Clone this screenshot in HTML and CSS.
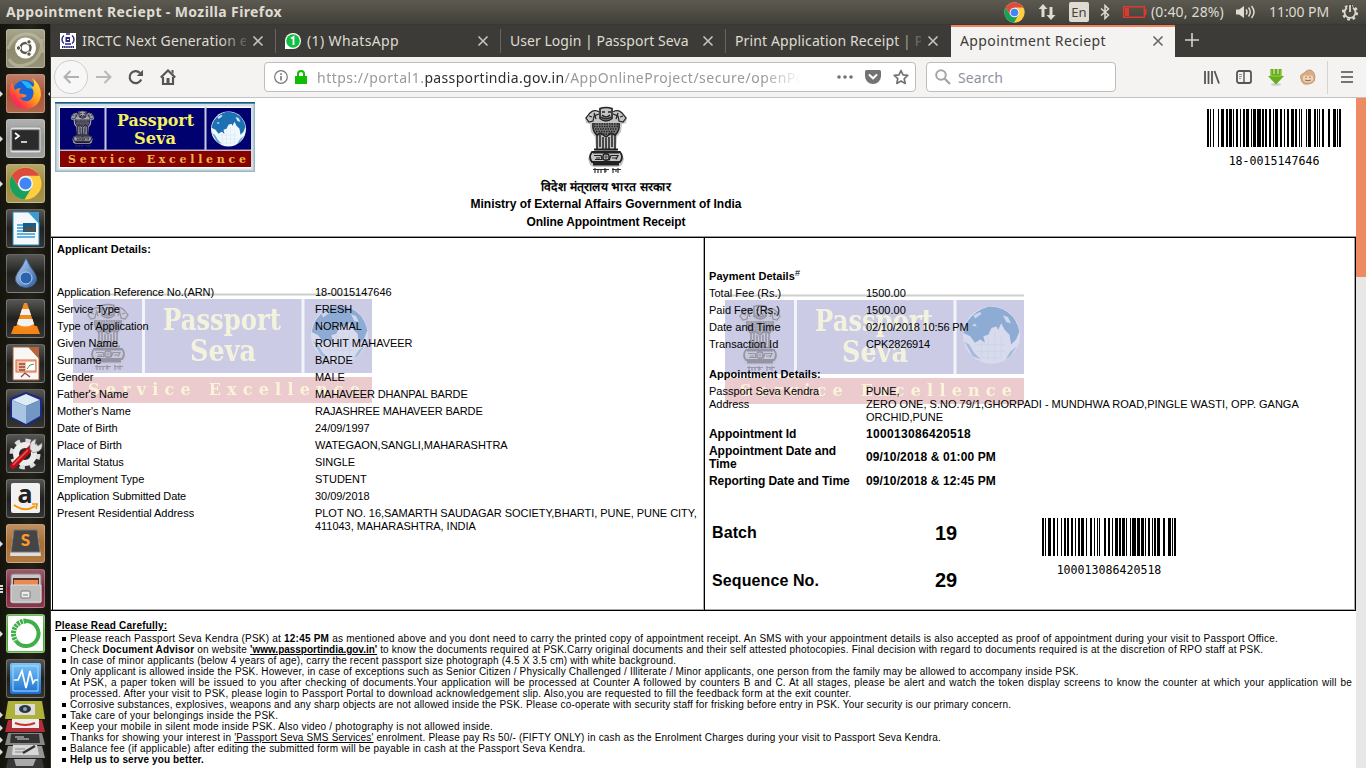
FILE: index.html
```html
<!DOCTYPE html>
<html lang="en">
<head>
<meta charset="utf-8">
<title>Appointment Reciept</title>
<link rel="stylesheet" href="styles.css">
</head>
<body>
<svg class="defs" width="0" height="0">
  <defs>
    <linearGradient id="fox" x1="1" y1="0" x2="0" y2="1"><stop offset="0" stop-color="#fff44f"/><stop offset=".45" stop-color="#ff9a1a"/><stop offset=".75" stop-color="#ff3647"/><stop offset="1" stop-color="#e31587"/></linearGradient>
    <linearGradient id="drop" x1="0" y1="0" x2="1" y2="1"><stop offset="0" stop-color="#c5daf2"/><stop offset="1" stop-color="#2a5ea8"/></linearGradient>
    <linearGradient id="blue" x1="0" y1="0" x2="0" y2="1"><stop offset="0" stop-color="#7cc4f8"/><stop offset="1" stop-color="#1a70cf"/></linearGradient>
    <symbol id="chrome" viewBox="0 0 32 32">
      <circle cx="16" cy="16" r="15.5" fill="#ffcd40"/>
      <path d="M2.6 8.2A15.5 15.5 0 0 0 15 31.5L22 20 16 16 9.5 19.8z" fill="#17a05e"/>
      <path d="M2.6 8.2 9.5 19.8 16 8.5H29.4A15.5 15.5 0 0 0 2.6 8.2z" fill="#dd4b3e"/>
      <circle cx="16" cy="16" r="7.4" fill="#f1f1f1"/><circle cx="16" cy="16" r="5.8" fill="#4286f5"/>
    </symbol>
    <symbol id="emblem" viewBox="0 0 44 68">
      <path d="M15 2h14v5l4-2 5 1 5 6-1 5-4 1-1 8-4 5-1 13 3 3h3l2 6-2 6-4 2H10l-4-2-2-6 2-6h3l3-3-1-13-4-5-1-8-4-1-1-5 5-6 5-1 3 2z" fill="#c4c4c4"/>
      <path d="M8 17h28l-1 8-3 5-5-1-5 2-5-2-5 1-3-5z" fill="#777"/>
      <g fill="none" stroke="#222">
        <path d="M16 2.500q6-2 12 0v10q-6 5-12 0zM18 6h3m3 0h3M18 9q4 4 8 0M17 11q5 4 10 0" stroke-width="1.600"/>
        <path d="M15 6q-5-3-9 1l-4 5 3 4 4-1 1-5 5-2M29 6q5-3 9 1l4 5-3 4-4-1-1-5-5-2M5 10l3 1M39 10l-3 1M10 7l2 6M34 7l-2 6" stroke-width="1.200"/>
        <path d="M9 17q-1 8 4 12l4-2 5 4 5-4 4 2q5-4 4-12" stroke-width="1.400"/>
        <path d="M10 18h24M10 20.500h24M11 23h22M12 25.500h20M14 28h16" stroke-width="1.300" stroke-dasharray="1.500 1"/>
        <path d="M13 29v14m3-14v12M19 31v12M22 32v11M25 31v12M28 29v12M31 29v14" stroke-width="1.500"/>
        <path d="M10 43.500h24M8 46q-4 5 0 10h28q4-5 0-10z" stroke-width="1.800"/>
        <path d="M9 47h26M10 49.500h7l1 4h-7m14 1 2-5h7l-2 4M12 52h4M28 52h5" stroke-width="1.200"/>
        <path d="M9 58h26" stroke-width="3"/>
        <circle cx="22" cy="51" r="3.200" stroke-width="1.400"/><path d="M22 48v6M19 51h6" stroke-width=".7"/>
      </g>
      <path d="M9 63.500h16m3 0h9M11 62v5m3-3v3m3-4v4m4-5v5m2-2h-3m9-3v5m3-4v3m2-4v5" fill="none" stroke="#333" stroke-width="1.200"/>
    </symbol>
    <symbol id="globe" viewBox="0 0 36 36">
      <circle cx="18" cy="18" r="17.500" fill="#f1f8fc"/>
      <path d="M3.500 9.500Q8 3 16 .8q9-.5 15 6 3 4 4 9l-2 5-3 3-1-6-3-3-2-4-2 4-1-2-3 1-2 4-3 1 1 4-3-2-3 2-3-4-4-2 1-4z" fill="#1d70b4"/>
      <path d="M7 6l4-2 1 1-4 3zM25 6l3 1 2 4-3-1zM6 12l2-1 1 2z" fill="#dceefa"/>
      <path d="M1.500 22l3 2 3 5 4 4-5-2zM33.500 25l-4 6-3 2 3-5z" fill="#5ba3d0"/>
      <path d="M8 24h19M9 28h17M12 32h11M12 21v11M16 18v16M20 16v18M24 18v15" stroke="#cfe4ee" stroke-width=".5"/>
    </symbol>
    <symbol id="watermark" viewBox="0 0 299 110">
      <g opacity=".2">
        <path d="M0 1.500h299" stroke="#111" stroke-width="2"/>
        <path d="M0 6h299v74H0z" fill="#000080"/><path d="M0 84h299v26H0z" fill="#a00010"/>
      </g>
      <g opacity=".32"><use href="#emblem" x="12" y="10" width="46" height="68"/></g>
      <g opacity=".35"><use href="#globe" x="237" y="9" width="59" height="64"/></g>
      <g opacity=".78">
        <text class="slab pale" x="90" y="37" font-size="30" textLength="118" lengthAdjust="spacingAndGlyphs">Passport</text>
        <text class="slab pale" x="117" y="68" font-size="29" textLength="66" lengthAdjust="spacingAndGlyphs">Seva</text>
        <text class="slab pale" x="15" y="102" font-size="16" textLength="272">Service Excellence</text>
        <path d="M70.500 6v74M230 6v74" stroke="#fff" stroke-width="3"/>
      </g>
    </symbol>
    <symbol id="close" viewBox="0 0 12 12"><path d="M1.500 1.500l9 9m0-9-9 9" stroke="currentColor" stroke-width="1.600" fill="none"/></symbol>
  </defs>
</svg>

<header class="panel">
  <span class="win-title">Appointment Reciept - Mozilla Firefox</span>
  <svg class="p-chrome" width="21" height="21"><use href="#chrome"/></svg>
  <svg class="p-net" width="18" height="18" viewBox="0 0 18 18"><path d="M5 1 0.500 6H3.500v8h3V6h3zM13 17l4.500-5H14.500V4h-3v8h-3z" fill="#dfdbd2"/></svg>
  <span class="p-lang">En</span>
  <svg class="p-bt" width="10" height="16" viewBox="0 0 10 16"><path d="M1 4.500 8.500 11 5 14.500v-13L8.500 5 1 11.500" fill="none" stroke="#dfdbd2" stroke-width="1.500"/></svg>
  <svg class="p-bat" width="24" height="12" viewBox="0 0 24 12"><path d="M.7.700h20.600v10.600H.7z" fill="none" stroke="#e0382d" stroke-width="1.400"/><path d="M2 2h4v8H2zM22 3h1.500v6H22z" fill="#e0382d"/></svg>
  <span class="p-charge">(0:40, 28%)</span>
  <svg class="p-snd" width="20" height="16" viewBox="0 0 20 16"><path d="M0 5.500h3L8 2v12l-5-3.500H0z" fill="#dfdbd2"/><path d="M10 5.500q2 2.500 0 5M12.500 3.500q3.500 4.500 0 9M15.500 2q5 6 0 12" fill="none" stroke="#dfdbd2" stroke-width="1.500"/></svg>
  <span class="p-time">11:00 PM</span>
  <svg class="p-gear" width="18" height="18" viewBox="0 0 18 18"><circle cx="9" cy="9.500" r="7" fill="none" stroke="#dfdbd2" stroke-width="2.200" stroke-dasharray="2.750"/><path d="M6 4.800a5.500 5.500 0 1 0 6 0" fill="none" stroke="#dfdbd2" stroke-width="1.800"/><path d="M9 1v8" stroke="#4c4b44" stroke-width="4.500"/><path d="M9 2v7" stroke="#dfdbd2" stroke-width="1.800"/></svg>
</header>

<div class="desktop">
<nav class="launcher">
  <div class="tile t-ubuntu"><svg viewBox="0 0 39 39"><path d="M2 20Q8 4 22 5T37 24M36 10Q36 30 22 35T3 30" fill="none" stroke="#c5c2ab" stroke-width="3" opacity=".6"/><circle cx="19.500" cy="19" r="10.500" fill="#fff"/><circle cx="19.500" cy="19" r="5" fill="none" stroke="#5a5848" stroke-width="2.400"/><g fill="#5a5848" stroke="#fff"><circle cx="12.500" cy="19" r="2.200"/><circle cx="23" cy="12.900" r="2.200"/><circle cx="23" cy="25.100" r="2.200"/></g></svg></div>
  <div class="tile t-firefox run active"><svg viewBox="0 0 39 39"><circle cx="19" cy="18" r="12" fill="#1764d8"/><path d="M15 7q10-1 12 8l-6-1z" fill="#21b5f5"/><path d="M6 8q-4 10-1 17 4 10 15 10 13-1 15-14 0-11-9-17 4 6 1 9-2-1-3-2 5 6 3 11-2 6-8 5-4-1-5-4 3 2 7-1-3-3-7-2-2-3 1-6-4 0-6 2-2-4-3-8z" fill="url(#fox)"/></svg></div>
  <div class="tile t-term run"><svg viewBox="0 0 39 39"><rect x="4" y="8" width="31" height="26" rx="2" fill="#e0e0e0" stroke="#999"/><rect x="6" y="11" width="27" height="20" fill="#2b2b2b" stroke="#555"/><path d="M9 14l4 3-4 3M15 23h6" fill="none" stroke="#fff" stroke-width="1.700"/></svg></div>
  <div class="tile t-chrome run"><svg viewBox="0 0 39 39"><use href="#chrome" x="3" y="3" width="33" height="33"/></svg></div>
  <div class="tile t-dark"><svg viewBox="0 0 39 39"><path d="M7 3h17l9 10v23H7z" fill="#f5f8fa" stroke="#2b8cc2"/><path d="M22 3h11v12z" fill="#3b9cd2"/><path d="M11 16h18M11 19h18M11 22h18M11 25h18M11 28h18" stroke="#63b1dc" stroke-width="2"/><path d="M17 14h13v9H17z" fill="#145e8c"/><path d="M18 22l4-5 3 3 2-3 3 5z" fill="#6a4c2c"/></svg></div>
  <div class="tile t-dark"><svg viewBox="0 0 39 39"><path d="M20 4q4 9 8 14 6 9-2 14-6 3-12 0-8-5-2-14 5-6 8-14z" fill="url(#drop)" stroke="#3c6291"/><ellipse cx="20" cy="24" rx="6" ry="6" fill="#2c63ae" stroke="#b2cdea"/></svg></div>
  <div class="tile t-dark"><svg viewBox="0 0 39 39"><path d="M8 27h23l3 8H5z" fill="#f58415"/><path d="M18 4h3l8 24q-10 6-19 0z" fill="#f58a1c"/><path d="M16 10h7l2 6H14zM12.500 20h14l1.500 5q-9 5-17 0z" fill="#f3f3f3"/></svg></div>
  <div class="tile t-dark"><svg viewBox="0 0 39 39"><path d="M7 3h17l9 10v23H7z" fill="#f9f7f5" stroke="#a85a34"/><path d="M22 3h11v12z" fill="#b7643d"/><rect x="10" y="16" width="20" height="12" fill="#f3bda5" stroke="#d7673e"/><path d="M13 20h6M13 23h6M13 26h6M15 33l4-4 5 4" fill="none" stroke="#8b4a35" stroke-width="1.300"/><path d="M20 18h9v8h-9z" fill="#fff"/><path d="M21 25l3-4 4-1" fill="none" stroke="#3c9a4d"/></svg></div>
  <div class="tile t-dark"><svg viewBox="0 0 39 39"><path d="M20 3 36 9v19L21 37 4 29V9z" fill="#1d2a80"/><path d="M20 5 34 11 20 17 6 11z" fill="#dcebf4"/><path d="M6 11l14 6v18L6 28z" fill="#a8c6e4"/><path d="M34 11 20 17v18l14-8z" fill="#7397c4"/></svg></div>
  <div class="tile t-dark"><svg viewBox="0 0 39 39"><circle cx="19" cy="20" r="13.500" fill="none" stroke="#dcdcdc" stroke-width="4" stroke-dasharray="5.300"/><circle cx="19" cy="20" r="9" fill="none" stroke="#ececec" stroke-width="6"/><path d="M7 32 26 13" stroke="#b90e16" stroke-width="6" stroke-linecap="round"/><path d="M7 31 22 16" stroke="#f15a50" stroke-width="1.500"/><path d="M24 15q-1-8 6-10l-1 5 3 2 4-3q1 8-6 9l-3 1z" fill="#e2e2e2" stroke="#888" stroke-width=".7"/></svg></div>
  <div class="tile t-dark"><svg viewBox="0 0 39 39"><rect x="5" y="4" width="29" height="30" rx="2" fill="#f1f1f1"/><text x="19" y="24" font-size="25" class="amz">a</text><path d="M8 26q11 8 21 1" fill="none" stroke="#f79400" stroke-width="2"/><path d="M26 25h5l-1 5" fill="none" stroke="#f79400" stroke-width="1.700"/></svg></div>
  <div class="tile t-sublime run"><svg viewBox="0 0 39 39"><path d="M7 10h25l3 22H4z" fill="#ddd"/><path d="M8 6h23l3 22H5z" fill="#454545" stroke="#777"/><text x="19.500" y="22" font-size="17" class="subl">S</text></svg></div>
  <div class="tile t-files run3"><svg viewBox="0 0 39 39"><rect x="5" y="5" width="30" height="29" rx="2" fill="#c8c8c8" stroke="#888"/><path d="M7 9h26v9H7z" fill="#54322a"/><path d="M8 11h24v6H8z" fill="#e98a51"/><path d="M5 16h30v17H5z" fill="#bdbdbd" stroke="#ddd"/><rect x="15" y="22" width="9" height="7" rx="1" fill="#eee" stroke="#777"/><path d="M17 26h5" stroke="#777"/></svg></div>
  <div class="tile t-conda run"><svg viewBox="0 0 39 39"><rect x="2" y="2" width="35" height="35" rx="1" fill="#fff"/><path d="M20 7A12.500 12.500 0 1 1 10 27" fill="none" stroke="#3fb049" stroke-width="4"/><path d="M20 7A12.500 12.500 0 0 0 10 27" fill="none" stroke="#3fb049" stroke-width="5" stroke-dasharray="2.500 .8"/></svg></div>
  <div class="tile t-dark"><svg viewBox="0 0 39 39"><rect x="4" y="4" width="31" height="31" rx="2" fill="url(#blue)"/><path d="M7 7h25v25H7z" fill="none" stroke="#acdcff"/><path d="M8 21h4l4-9 4 17 4-17 3 12 2-3h3" fill="none" stroke="#fff" stroke-width="1.700"/></svg></div>
  <svg class="stack" width="51" height="68" viewBox="0 0 51 68">
    <path d="M8 1h34l3 18H5z" fill="#aeb13a"/><rect x="15" y="4" width="20" height="11" fill="#ddd"/><ellipse cx="25" cy="9" rx="6" ry="4" fill="#333"/><circle cx="25" cy="9" r="2" fill="#6aaed8"/>
    <path d="M8 20h34l3 12H5z" fill="#b02e38"/><path d="M12 19h27v9H12z" fill="#eee"/><path d="M15 23q10 4 20 0" fill="none" stroke="#cc2c2c" stroke-width="2"/>
    <path d="M8 33h34l3 12H5z" fill="#888"/><path d="M11 34h28l1 9H10z" fill="#333"/><path d="M15 37h9M17 39h12" stroke="#ddd"/>
    <path d="M8 46h34l3 12H5z" fill="#969696"/><path d="M13 45h24l2 10H12z" fill="#d8d8d8"/><path d="M15 49h10M15 52h9" stroke="#888"/><path d="M23 53l12-7" stroke="#333" stroke-width="2.500"/>
    <path d="M8 59h34l2 9H6z" fill="#383838"/><path d="M14 59h22l-3 7H16z" fill="#aaa"/>
    <path d="M0 12l3 3-3 3zM0 25l3 3-3 3zM0 37l3 3-3 3zM0 49l3 3-3 3z" fill="#ddd"/>
  </svg>
</nav>

<main class="browser">
  <div class="tabs">
    <div class="tab"><svg width="16" height="16" viewBox="0 0 16 16"><path d="M0 0h16v16H0z" fill="#fff"/><path d="M4 2.500A5 5 0 0 0 4 10.500M12 2.500a5 5 0 0 1 0 8M6 1h4M5 11h6" fill="none" stroke="#26267e" stroke-width="1.400"/><path d="M5.500 4h4.500v5H5.500z" fill="#26267e"/><path d="M7 6.500h2" stroke="#fff"/><path d="M2 14h12" stroke="#26267e" stroke-width="2.200" stroke-dasharray="1.500 .6"/></svg><span class="t1">IRCTC Next Generation e</span><i class="fade"></i><svg class="x" width="12" height="12"><use href="#close"/></svg></div>
    <div class="tab"><svg width="16" height="16" viewBox="0 0 16 16"><path d="M0 16V8a8 8 0 1 1 8 8z" fill="#fff"/><circle cx="8" cy="8" r="6.800" fill="#12bf45"/><path d="M6 5.500 8.500 4v8" fill="none" stroke="#fff" stroke-width="1.800"/></svg><span class="t2">(1) WhatsApp</span><svg class="x" width="12" height="12"><use href="#close"/></svg></div>
    <div class="tab"><span class="t3">User Login | Passport Seva</span><svg class="x" width="12" height="12"><use href="#close"/></svg></div>
    <div class="tab last"><span class="t4">Print Application Receipt | P</span><i class="fade"></i><svg class="x" width="12" height="12"><use href="#close"/></svg></div>
    <div class="tab current"><span class="t2">Appointment Reciept</span><svg class="x" width="12" height="12"><use href="#close"/></svg></div>
    <svg class="plus" width="14" height="14" viewBox="0 0 14 14"><path d="M7 0v14M0 7h14" stroke="#d5d3ce" stroke-width="1.600"/></svg>
  </div>
  <div class="toolbar">
    <span class="back"><svg width="16" height="14" viewBox="0 0 16 14"><path d="M7.500 1 1.500 7l6 6M1.500 7H16" fill="none" stroke="#b3b2b0" stroke-width="2"/></svg></span>
    <svg class="fwd" width="16" height="14" viewBox="0 0 16 14"><path d="M8.500 1l6 6-6 6M14.500 7H0" fill="none" stroke="#b9b8b6" stroke-width="2"/></svg>
    <svg class="reload" width="16" height="16" viewBox="0 0 16 16"><path d="M13.200 10.500A6 6 0 1 1 12 4" fill="none" stroke="#555" stroke-width="2.200"/><path d="M15 .8V7H8.800z" fill="#555"/></svg>
    <svg class="home" width="16" height="16" viewBox="0 0 16 16"><path d="M.8 8.500 8 1.500l7.200 7M3 8v7h10V8" fill="none" stroke="#555" stroke-width="2.200"/><path d="M6.500 9h3v6h-3z" fill="#555"/><path d="M11.500 1h2v4l-2-2z" fill="#555"/></svg>
    <div class="urlbar">
      <svg width="14" height="14" viewBox="0 0 14 14"><circle cx="7" cy="7" r="6.300" fill="none" stroke="#777" stroke-width="1.200"/><path d="M7 6v4.500M7 3.300v1.600" stroke="#777" stroke-width="1.600"/></svg>
      <svg class="lock" width="12" height="14" viewBox="0 0 12 14"><path d="M0 6h12v8H0z" fill="#12bc00"/><path d="M3 7V4q0-3 3-3t3 3v3" fill="none" stroke="#12bc00" stroke-width="2"/></svg>
      <span class="url">https://portal1.<b>passportindia.gov.in</b>/AppOnlineProject/secure/openPo</span>
      <svg class="dots" width="16" height="4" viewBox="0 0 16 4"><path d="M2 2h.01M8 2h.01M14 2h.01" stroke="#737373" stroke-width="3.600" stroke-linecap="round"/></svg>
      <svg class="pocket" width="16" height="14" viewBox="0 0 16 14"><path d="M1.500 0h13Q16 0 16 1.500V6A8 8 0 0 1 0 6V1.500Q0 0 1.500 0z" fill="#737373"/><path d="M4.500 5 8 8.300 11.500 5" fill="none" stroke="#fff" stroke-width="2" stroke-linecap="round"/></svg>
      <svg class="star" width="16" height="16" viewBox="0 0 16 16"><path d="M8 1.500l2 4.400 4.800.5-3.600 3.200 1 4.800L8 12l-4.200 2.400 1-4.800L1.200 6.400 6 5.900z" fill="none" stroke="#737373" stroke-width="1.700" stroke-linejoin="round"/></svg>
    </div>
    <div class="search"><svg width="16" height="16" viewBox="0 0 16 16"><circle cx="6" cy="6" r="4.800" fill="none" stroke="#a5a5a5" stroke-width="2"/><path d="M9.500 9.500 15 15" stroke="#a5a5a5" stroke-width="2.300"/></svg><span>Search</span></div>
    <div class="tools">
      <svg width="16" height="14" viewBox="0 0 16 14"><path d="M1 1v13M4.500 1v13M8 1v13M10.500 1l4.500 12.500" stroke="#555" stroke-width="1.800"/></svg>
      <svg width="16" height="14" viewBox="0 0 16 14"><rect x="1" y="1" width="14" height="12" rx="2" fill="none" stroke="#555" stroke-width="1.800"/><path d="M8 1v12" stroke="#555" stroke-width="1.400"/><path d="M3 4.500h3M3 6.500h3M3 8.500h2" stroke="#777" stroke-width=".8"/></svg>
      <svg width="16" height="17" viewBox="0 0 16 17"><ellipse cx="8" cy="15.500" rx="5" ry="1.200" fill="#ccc"/><path d="M2.500 0h3v5h1V0h3v5h1V0h3v7H16l-8 8.500L0 7h2.500z" fill="#65ad1d"/><path d="M3 1v6h10V1" fill="none" stroke="#9bd13f"/></svg>
      <svg width="16" height="16" viewBox="0 0 16 16"><path d="M4 4Q7 0 11 1q4 2 4 7t-3 6q-4 2-8 1-3-2-3-5-2-4 3-6z" fill="#d9ac85" stroke="#b98c67" stroke-width=".7"/><path d="M3 8q1-3 5-1 4-2 5 1 1 5-5 5.500Q2 13 3 8z" fill="#f0d6b6"/><path d="M6 7.500v1.500M10 7.500v1.500M5 11q3 1.500 6 0" fill="none" stroke="#8a6547"/></svg>
      <i class="sep"></i>
      <svg class="burger" width="12" height="12" viewBox="0 0 12 12"><path d="M0 1h12M0 6h12M0 11h12" stroke="#4c4c4c" stroke-width="1.700"/></svg>
    </div>
  </div>

  <div class="view">
    <article class="receipt">
      <div class="head">
        <svg class="logo" width="200" height="70" viewBox="0 0 200 70">
          <path d="M0 0h200v70H0z" fill="#98b8c4"/><path d="M0 0h200v1.500H0z" fill="#125a86"/><path d="M1.500 2h197v66.500H1.500z" fill="#d3dde4"/><path d="M4 4.500h192v62H4z" fill="#fff"/>
          <path d="M5 6h191v42H5z" fill="#00006e"/><path d="M5 49h191v16H5z" fill="#870000"/><path d="M5 48.200h191" stroke="#aab" stroke-width="1.200"/>
          <path d="M50.500 5v43M150.500 5v43" stroke="#c9c9e2" stroke-width="2"/>
          <g opacity=".85"><use href="#emblem" x="12" y="8" width="31" height="38"/></g><use href="#globe" x="155" y="9" width="37" height="36"/>
          <text class="slab" x="62" y="24" font-size="17" textLength="77" lengthAdjust="spacingAndGlyphs">Passport</text>
          <text class="slab" x="79" y="41.500" font-size="17" textLength="42" lengthAdjust="spacingAndGlyphs">Seva</text>
          <text class="slab gold" x="13" y="61" font-size="11" textLength="178">Service Excellence</text>
        </svg>
        <div class="ministry">
          <svg width="46" height="68"><use href="#emblem"/></svg>
          <p class="hi" lang="hi">विदेश मंत्&zwnj;रालय भारत सरकार</p>
          <p>Ministry of External Affairs Government of India</p>
          <p class="l3">Online Appointment Receipt</p>
        </div>
        <div class="barcode top">
          <svg width="134" height="38" viewBox="0 0 134 38" shape-rendering="crispEdges"><path d="M0 19h134" stroke="#000" stroke-width="38" stroke-dasharray="2 1 1 2 1 4 1 2 3 2 2 1 3 1 1 2 2 2 1 2 2 1 3 2 1 1 3 1 4 1 2 1 2 2 2 2 1 1 3 2 2 2 1 2 2 2 3 1 2 2 1 1 1 4 1 1 3 3 2 1 1 1 1 2 2 4 2 3 3 1 1 1 2 0"/></svg>
          <span>18-0015147646</span>
        </div>
      </div>

      <div class="details">
        <section class="applicant">
          <svg class="wm" width="299" height="110"><use href="#watermark"/></svg>
          <h2>Applicant Details:</h2>
          <dl>
            <dt>Application Reference No.(ARN)</dt><dd>18-0015147646</dd>
            <dt>Service Type</dt><dd>FRESH</dd>
            <dt>Type of Application</dt><dd>NORMAL</dd>
            <dt>Given Name</dt><dd>ROHIT MAHAVEER</dd>
            <dt>Surname</dt><dd>BARDE</dd>
            <dt>Gender</dt><dd>MALE</dd>
            <dt>Father's Name</dt><dd class="snug">MAHAVEER DHANPAL BARDE</dd>
            <dt>Mother's Name</dt><dd class="snug">RAJASHREE MAHAVEER BARDE</dd>
            <dt>Date of Birth</dt><dd>24/09/1997</dd>
            <dt>Place of Birth</dt><dd>WATEGAON,SANGLI,MAHARASHTRA</dd>
            <dt>Marital Status</dt><dd>SINGLE</dd>
            <dt>Employment Type</dt><dd>STUDENT</dd>
            <dt class="snug">Application Submitted Date</dt><dd>30/09/2018</dd>
            <dt>Present Residential Address</dt><dd>PLOT NO. 16,SAMARTH SAUDAGAR SOCIETY,BHARTI, PUNE, PUNE CITY,<br>411043, MAHARASHTRA, INDIA</dd>
          </dl>
        </section>
        <section class="payment">
          <svg class="wm" width="299" height="110"><use href="#watermark"/></svg>
          <h2>Payment Details<sup>#</sup></h2>
          <dl>
            <dt>Total Fee (Rs.)</dt><dd>1500.00</dd>
            <dt>Paid Fee (Rs.)</dt><dd>1500.00</dd>
            <dt>Date and Time</dt><dd class="snug">02/10/2018 10:56 PM</dd>
            <dt>Transaction Id</dt><dd class="snug">CPK2826914</dd>
          </dl>
          <h2 class="second">Appointment Details:</h2>
          <dl>
            <dt class="tight">Passport Seva Kendra</dt><dd class="tight">PUNE,</dd>
            <dt class="addr">Address</dt><dd class="addr">ZERO ONE, S.NO.79/1,GHORPADI - MUNDHWA ROAD,PINGLE WASTI, OPP. GANGA<br>ORCHID,PUNE</dd>
            <dt class="big">Appointment Id</dt><dd class="big num">100013086420518</dd>
            <dt class="big">Appointment Date and<br>Time</dt><dd class="big mid">09/10/2018 &amp; 01:00 PM</dd>
            <dt class="big">Reporting Date and Time</dt><dd class="big">09/10/2018 &amp; 12:45 PM</dd>
          </dl>
          <div class="queue">
            <div class="labels"><p>Batch</p><p>Sequence No.</p></div>
            <div class="numbers"><p>19</p><p>29</p></div>
            <div class="barcode">
              <svg width="134" height="38" viewBox="0 0 134 38" shape-rendering="crispEdges"><path d="M0 19h134" stroke="#000" stroke-width="38" stroke-dasharray="2 1 1 2 3 2 2 2 1 3 1 2 2 1 2 2 2 2 1 2 2 1 3 2 1 3 2 2 1 2 1 1 1 4 2 2 2 2 1 2 3 1 2 1 3 1 1 3 1 1 4 1 3 1 3 1 1 2 2 2 1 1 2 1 3 3 2 3 3 1 1 1 2 0"/></svg>
              <span>100013086420518</span>
            </div>
          </div>
        </section>
      </div>

      <section class="notes">
        <h3>Please Read Carefully:</h3>
        <ul>
          <li class="n1">Please reach Passport Seva Kendra (PSK) at <b>12:45 PM</b> as mentioned above and you dont need to carry the printed copy of appointment receipt. An SMS with your appointment details is also accepted as proof of appointment during your visit to Passport Office.</li>
          <li>Check <b>Document Advisor</b> on website <b class="site"><u>'www.passportindia.gov.in'</u></b> to know the documents required at PSK.Carry original documents and their self attested photocopies. Final decision with regard to documents required is at the discretion of RPO staff at PSK.</li>
          <li class="n3">In case of minor applicants (below 4 years of age), carry the recent passport size photograph (4.5 X 3.5 cm) with white background.</li>
          <li class="n4">Only applicant is allowed inside the PSK. However, in case of exceptions such as Senior Citizen / Physically Challenged / Illiterate / Minor applicants, one person from the family may be allowed to accompany inside PSK.</li>
          <li><span class="just">At PSK, a paper token will be issued to you after checking of documents.Your application will be processed at Counter A followed by counters B and C. At all stages, please be alert and watch the token display screens to know the counter at which your application will be</span>processed. After your visit to PSK, please login to Passport Portal to download acknowledgement slip. Also,you are requested to fill the feedback form at the exit counter.</li>
          <li class="n6">Corrosive substances, explosives, weapons and any sharp objects are not allowed inside the PSK. Please co-operate with security staff for frisking before entry in PSK. Your security is our primary concern.</li>
          <li>Take care of your belongings inside the PSK.</li>
          <li>Keep your mobile in silent mode inside PSK. Also video / photography is not allowed inside.</li>
          <li class="n9">Thanks for showing your interest in <u>'Passport Seva SMS Services'</u> enrolment. Please pay Rs 50/- (FIFTY ONLY) in cash as the Enrolment Charges during your visit to Passport Seva Kendra.</li>
          <li>Balance fee (if applicable) after editing the submitted form will be payable in cash at the Passport Seva Kendra.</li>
          <li class="n11"><b>Help us to serve you better.</b></li>
        </ul>
      </section>
    </article>
    <div class="scroll"><i></i></div>
  </div>
</main>
</div>
</body>
</html>
```
FILE: styles.css
```css
* { box-sizing: border-box; margin: 0; padding: 0; }
body { width: 1366px; height: 768px; overflow: hidden; display: flex; flex-direction: column; background: #fff; font-family: "Noto Sans", sans-serif; }
svg { display: block; flex: none; }
.defs { position: absolute; }

/* Top panel */
.panel { height: 24px; flex: none; display: flex; align-items: center; padding: 0 7px 0 6px; background: linear-gradient(#5c5a50, #403f39); color: #dfdbd2; font-size: 14px; line-height: 24px; white-space: nowrap; }
.win-title { flex: 1; font-weight: bold; letter-spacing: .384px; }
.p-net, .p-lang, .p-bat, .p-time { margin-left: 13px; }
.p-lang { width: 20px; height: 20px; border-radius: 2px; background: #dfdbd2; color: #45443d; font-size: 13px; line-height: 21px; text-align: center; }
.p-bt { margin-left: 11px; }
.p-charge { width: 73px; margin-left: 4px; letter-spacing: .16px; }
.p-snd, .p-gear { margin-left: 12px; }
.p-time { width: 60px; letter-spacing: -.07px; }

.desktop { flex: 1; display: flex; min-height: 0; }

/* Launcher */
.launcher { width: 51px; flex: none; padding: 5px 0 0 6px; display: flex; flex-direction: column; gap: 6px; background: linear-gradient(90deg, #14140d, #24231a 60%, #14140e); overflow: hidden; border-right: 1px solid #33332b; }
.tile { position: relative; width: 39px; height: 39px; flex: none; border-radius: 3px; border: 1px solid rgba(255,255,255,.25); background-image: linear-gradient(rgba(255,255,255,.25), rgba(255,255,255,.02) 50%, rgba(255,255,255,.1)); }
.tile svg { width: 39px; height: 39px; margin: -1px; }
.t-ubuntu { background-color: #8a8768; }
.t-firefox { background-color: #a85336; }
.t-term { background-color: #959595; }
.t-chrome { background-color: #9c8838; }
.t-dark { background-color: #1d1d1b; }
.t-sublime { background-color: #a86a2c; }
.t-files { background-color: #7c2238; }
.t-conda { background-color: #46a52b; }
.run::before, .active::after, .run3::before { content: ""; position: absolute; top: 16px; left: -7px; border: 3px solid transparent; border-left-color: #ddd; border-right: 0; }
.active::after { left: auto; right: -7px; border-right: 3px solid #ddd; border-left: 0; }
.run3::before { top: 15px; border: 0; width: 3px; height: 8px; background: repeating-linear-gradient(#ddd 0 2px, transparent 2px 3px); }
.stack { margin: -4px 0 0 -6px; }
.amz { font-family: "Noto Sans", sans-serif; font-weight: bold; text-anchor: middle; fill: #222; }
.subl { font-family: Lato, sans-serif; font-weight: 900; text-anchor: middle; fill: #ff9a2a; }

/* Browser chrome */
.browser { flex: 1; display: flex; flex-direction: column; min-width: 0; }
.tabs { height: 33px; flex: none; display: flex; align-items: center; background: #3c3b37; border-top: 1px solid #393834; color: #dfdbd2; font-size: 14px; white-space: nowrap; }
.tab { position: relative; width: 225px; height: 32px; display: flex; align-items: center; gap: 6px; padding: 0 12px 1px 9px; color: #dfdbd2; }
.tab::after { content: ""; position: absolute; right: 0; top: 4px; width: 1px; height: 24px; background: #66655f; }
.tab.last::after, .tab.current::after { display: none; }
.tab span { overflow: hidden; line-height: 30px; flex: 1; }
.fade { position: absolute; right: 24px; top: 4px; width: 32px; height: 24px; background: linear-gradient(90deg, transparent, #3c3b37); }
.t1 { letter-spacing: .17px; }
.t2 { letter-spacing: .378px; }
.t3 { letter-spacing: .04px; }
.t4 { letter-spacing: .13px; }
.x { color: #c6c4be; }
.tab.current { width: 224px; padding: 0 11px 3px 9px; background: #f4f3f2; color: #3c3b37; border-top: 2px solid #f0835a; }
.tab.current .x { color: #666; }
.plus { margin-left: 10px; margin-top: -2px; }
.toolbar { height: 41px; flex: none; display: flex; align-items: center; padding-left: 3px; background: #f4f3f2; border-bottom: 1px solid #c4c3c1; }
.back { width: 34px; height: 34px; display: grid; place-items: center; border: 1px solid #cfcecc; border-radius: 50%; background: #f8f7f7; }
.fwd { margin-left: 8px; }
.reload, .home { margin-left: 16px; }
.urlbar { width: 652px; height: 30px; margin-left: 88px; padding: 0 6px 0 9px; display: flex; align-items: center; border: 1px solid #bfbdbb; border-radius: 4px; background: #fff; font-size: 14px; }
.lock { margin-left: 7px; }
.url { width: 485px; margin-left: 10px; overflow: hidden; white-space: nowrap; color: #999; letter-spacing: .5px; -webkit-mask-image: linear-gradient(90deg, #000 445px, transparent 484px); mask-image: linear-gradient(90deg, #000 445px, transparent 484px); }
.url b { font-weight: normal; color: #2d2d2d; letter-spacing: .34px; }
.dots { margin-left: auto; }
.pocket, .star { margin-left: 12px; }
.search { width: 190px; height: 30px; margin-left: 10px; padding-left: 8px; display: flex; align-items: center; gap: 7px; border: 1px solid #bfbdbb; border-radius: 4px; background: #fff; color: #8f9399; font-size: 14px; letter-spacing: .12px; }
.tools { flex: 1; display: flex; align-items: center; justify-content: flex-end; gap: 16px; padding-right: 13px; }
.sep { width: 1px; height: 33px; margin: 0 -4px 0 -5px; background: #d5d4d2; }
.burger { margin-left: 1px; }

/* Receipt page */
.view { flex: 1; display: flex; min-height: 0; }
.scroll { width: 10px; flex: none; background: #e8e7e6; }
.scroll i { display: block; height: 179px; background: #ee8b63; }
.receipt { width: 1305px; flex: none; overflow: hidden; font-family: "Liberation Sans", sans-serif; font-size: 11px; line-height: 13px; color: #000; }
.head { height: 138px; display: grid; grid-template-columns: 450px 209px 1fr; }
.logo { margin: 4px 0 0 4px; }
.ministry { width: 300px; margin: 8px 0 0 -45px; display: flex; flex-direction: column; align-items: center; font-weight: bold; font-size: 12px; white-space: nowrap; }
.ministry p { line-height: 18px; letter-spacing: -.03px; }
.ministry .hi { margin-top: 5px; height: 16px; line-height: 17px; font-size: 12.2px; letter-spacing: .26px; }
.ministry .l3 { letter-spacing: -.07px; }
.barcode { display: flex; flex-direction: column; align-items: center; width: 134px; font: 11.6px/14px "DejaVu Sans Mono", monospace; }
.barcode span { margin-top: 7px; }
.barcode.top { justify-self: end; margin: 11px 15px 0 0; }
.slab { font-family: "DejaVu Serif", serif; font-weight: bold; fill: #f5f060; }
.slab.gold { fill: #e8b84c; }
.slab.pale { fill: #ffffdc; }

.details { display: grid; grid-template-columns: 652px 652px; grid-template-rows: 372px; height: 375px; border-top: 1px solid #999; border-bottom: 1px solid #000; box-shadow: inset 0 1px #000, inset 0 -1px #aaa; padding-top: 1px; }
.details section { position: relative; border-left: 1px solid #000; }
.applicant { margin-left: 1px; padding: 5px 0 0 4px; }
.payment { margin-left: 1px; padding: 32px 0 0 4px; border-right: 1px solid #000; box-shadow: -1px 0 #aaa, inset -1px 0 #aaa; width: 652px; }
.wm { position: absolute; left: 20px; top: 55px; }
.payment .wm { top: 56px; }
.details h2, .details dl, .queue { position: relative; }
.details h2 { font-size: 11px; line-height: 13px; letter-spacing: .06px; }
.details sup { font-size: 9px; font-weight: normal; line-height: 0; vertical-align: 4px; }
dl { display: grid; grid-template-columns: 258px 1fr; letter-spacing: -.04px; white-space: nowrap; }
dt, dd { padding: 2px 0; }
.applicant dl { margin-top: 28px; }
.payment dl { grid-template-columns: 157px 1fr; letter-spacing: 0; margin-top: 2px; }
.details .snug { letter-spacing: -.14px; }
.details .second { margin-top: 15px; }
.payment .tight { padding-bottom: 0; }
.payment .addr { padding-top: 0; }
.payment .big { align-self: center; font-size: 12px; font-weight: bold; letter-spacing: -.05px; }
.payment dd.big { letter-spacing: .12px; }
.payment dd.num { letter-spacing: .33px; }
.payment dd.mid { padding-bottom: 4px; }
.queue { display: flex; margin: 28px 0 0 3px; font-weight: bold; }
.labels { width: 223px; font-size: 16px; letter-spacing: .1px; }
.numbers { width: 107px; font-size: 20px; }
.labels p, .numbers p { height: 48px; line-height: 30px; }
.numbers p:last-child { line-height: 28px; }
.queue .barcode { font-weight: normal; }

.notes { padding: 8px 4px 0; font-size: 10px; line-height: 11px; letter-spacing: .208px; }
.notes h3 { font-size: 10px; line-height: 13px; margin-bottom: 1px; text-decoration: underline; letter-spacing: .2px; }
.notes ul { list-style: none; }
.notes li { position: relative; padding-left: 15px; white-space: nowrap; }
.notes li::before { content: ""; position: absolute; left: 7px; top: 4px; width: 4px; height: 4px; background: #000; }
.just { display: block; text-align: justify; text-align-last: justify; }
.notes .n1 { letter-spacing: .22px; }
.notes .n3 { letter-spacing: .193px; }
.notes .site { letter-spacing: -.02px; }
.notes .n4, .notes .n6 { letter-spacing: .175px; }
.notes .n9 { letter-spacing: .175px; }
.notes .n11 { letter-spacing: .12px; }
```
